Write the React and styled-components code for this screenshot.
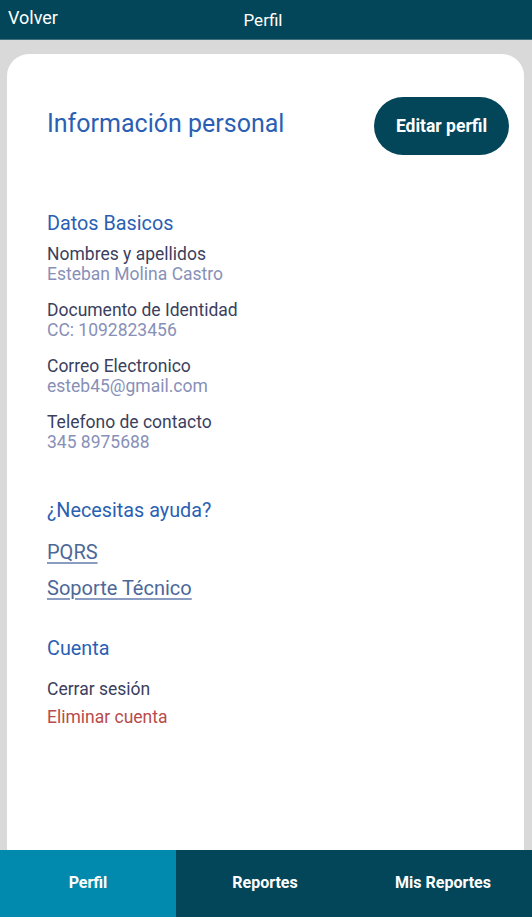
import React from 'react';
import styled, { createGlobalStyle } from 'styled-components';

const GlobalStyle = createGlobalStyle`
  body {
    margin: 0;
    font-family: Roboto, "Liberation Sans", sans-serif;
  }
`;

const Page = styled.div`
  display: flex;
  flex-direction: column;
  height: 100vh;
  background: #d9d9d9;
  overflow: hidden;
`;

const TopBar = styled.header`
  display: flex;
  align-items: center;
  height: 40px;
  padding: 0 8px;
  background: #03465a;
  color: #ffffff;
  font-size: 18px;
  flex-shrink: 0;
  box-sizing: border-box;
  border-bottom: 1px solid #3f6f7d;
`;

const BackLink = styled.span`
  margin-top: -4px;
`;

const TopTitle = styled.span`
  flex: 1;
  text-align: center;
  margin-right: 56px;
  font-size: 17px;
`;

const Main = styled.main`
  flex: 1;
  min-height: 0;
  padding: 14px 8px 0 7px;
`;

const Card = styled.section`
  height: 100%;
  background: #ffffff;
  border-radius: 22px 22px 0 0;
  padding: 43px 15px 0 40px;
  box-sizing: border-box;
`;

const TitleRow = styled.div`
  display: flex;
  align-items: center;
  justify-content: space-between;
  height: 58px;
`;

const Title = styled.h1`
  margin: 0 0 6px;
  font-size: 25px;
  font-weight: 400;
  color: #2b5fb4;
`;

const EditButton = styled.button`
  height: 58px;
  width: 135px;
  border: none;
  border-radius: 29px;
  background: #03465a;
  color: #ffffff;
  font-family: inherit;
  font-size: 17.5px;
  font-weight: 700;
`;

const SectionTitle = styled.h2`
  margin: ${p => p.$top}px 0 0;
  font-size: 19.8px;
  line-height: 24px;
  font-weight: 400;
  color: #2b5fb4;
`;

const FieldList = styled.div`
  display: flex;
  flex-direction: column;
  gap: 16px;
  margin-top: 8px;
`;

const Field = styled.div`
  display: flex;
  flex-direction: column;
`;

const Label = styled.span`
  font-size: 17.5px;
  line-height: 20px;
  color: #3b3f5e;
`;

const Value = styled.span`
  font-size: 17.5px;
  line-height: 20px;
  color: #8890b8;
`;

const LinkList = styled.div`
  display: flex;
  flex-direction: column;
  align-items: flex-start;
  gap: 12px;
  margin-top: 17px;
`;

const HelpLink = styled.a`
  font-size: 20px;
  line-height: 24px;
  color: #4c6899;
  text-decoration: underline;
  text-decoration-color: #8a9cc0;
  text-underline-offset: 3px;
`;

const AccountList = styled.div`
  display: flex;
  flex-direction: column;
  gap: 8px;
  margin-top: 18px;
`;

const AccountAction = styled.span`
  font-size: 17.5px;
  line-height: 20px;
  color: ${p => (p.$danger ? '#b84b4b' : '#3b3f5e')};
`;

const TabBar = styled.nav`
  display: grid;
  grid-template-columns: 176px 1fr 1fr;
  height: 67px;
  flex-shrink: 0;
  background: #03465a;
`;

const Tab = styled.div`
  display: flex;
  align-items: center;
  justify-content: center;
  padding-bottom: 2px;
  background: ${p => (p.$active ? '#018aad' : 'transparent')};
  color: #ffffff;
  font-size: 16px;
  font-weight: 700;
`;

const fields = [
  ['Nombres y apellidos', 'Esteban Molina Castro'],
  ['Documento de Identidad', 'CC: 1092823456'],
  ['Correo Electronico', 'esteb45@gmail.com'],
  ['Telefono de contacto', '345 8975688'],
];

export default function App() {
  return (
    <>
      <GlobalStyle />
      <Page>
        <TopBar>
          <BackLink>Volver</BackLink>
          <TopTitle>Perfil</TopTitle>
        </TopBar>
        <Main>
          <Card>
            <TitleRow>
              <Title>Información personal</Title>
              <EditButton>Editar perfil</EditButton>
            </TitleRow>

            <SectionTitle $top={57}>Datos Basicos</SectionTitle>
            <FieldList>
              {fields.map(([label, value]) => (
                <Field key={label}>
                  <Label>{label}</Label>
                  <Value>{value}</Value>
                </Field>
              ))}
            </FieldList>

            <SectionTitle $top={47}>¿Necesitas ayuda?</SectionTitle>
            <LinkList>
              <HelpLink>PQRS</HelpLink>
              <HelpLink>Soporte Técnico</HelpLink>
            </LinkList>

            <SectionTitle $top={37}>Cuenta</SectionTitle>
            <AccountList>
              <AccountAction>Cerrar sesión</AccountAction>
              <AccountAction $danger>Eliminar cuenta</AccountAction>
            </AccountList>
          </Card>
        </Main>
        <TabBar>
          <Tab $active>Perfil</Tab>
          <Tab>Reportes</Tab>
          <Tab>Mis Reportes</Tab>
        </TabBar>
      </Page>
    </>
  );
}
